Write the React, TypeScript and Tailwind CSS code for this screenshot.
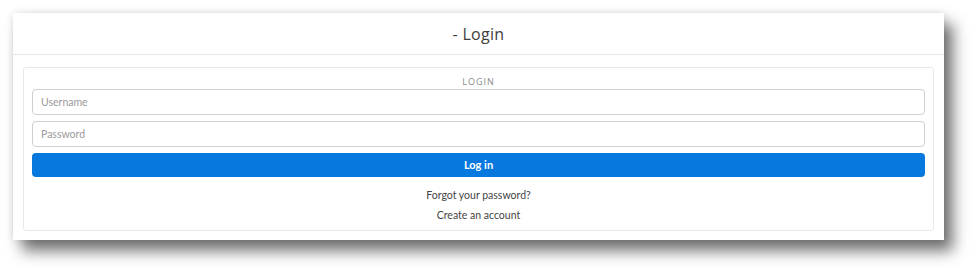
import React from "react";

export default function App() {
  return (
    <div className="w-[976px] h-[269px] bg-white pt-[13px] pl-[13px]" style={{ fontFamily: "Lato, 'Open Sans', sans-serif" }}>
      <div className="w-[931px] h-[227px] bg-white flex flex-col shadow-[9px_11px_14px_rgba(0,0,0,0.55),0_0_8px_rgba(0,0,0,0.12)]">
        <div className="h-[42px] border-b border-[#e6e6e6] flex items-center justify-center">
          <span className="text-[16px] text-[#3e3e3c] tracking-[0.3px]" style={{ fontFamily: "'Open Sans', sans-serif" }}>- Login</span>
        </div>
        <div className="px-[10px] pt-[12px]">
          <div className="h-[164px] border border-[#e9e9e9] rounded-[3px] px-[8px] flex flex-col">
            <div className="h-[21px] flex items-center justify-center pt-[6px]">
              <span className="text-[9px] tracking-[1px] text-[#8a8a8a] leading-[11px]" style={{ fontFamily: "'Open Sans', sans-serif" }}>LOGIN</span>
            </div>
            <div className="h-[26px] border border-[#cfcfcf] rounded-[4px] flex items-center pl-[8px] pt-[1px] text-[10.5px] text-[#9a9a9a]">Username</div>
            <div className="h-[26px] mt-[6px] border border-[#cfcfcf] rounded-[4px] flex items-center pl-[8px] pt-[1px] text-[10.5px] text-[#9a9a9a]">Password</div>
            <div className="h-[24px] mt-[6px] bg-[#0778de] rounded-[4px] flex items-center justify-center text-white font-bold text-[11px]">Log in</div>
            <div className="mt-[12px] text-center text-[10.5px] text-[#444444] leading-[13px]">Forgot your password?</div>
            <div className="mt-[7px] text-center text-[10.5px] text-[#444444] leading-[13px]">Create an account</div>
          </div>
        </div>
      </div>
    </div>
  );
}
